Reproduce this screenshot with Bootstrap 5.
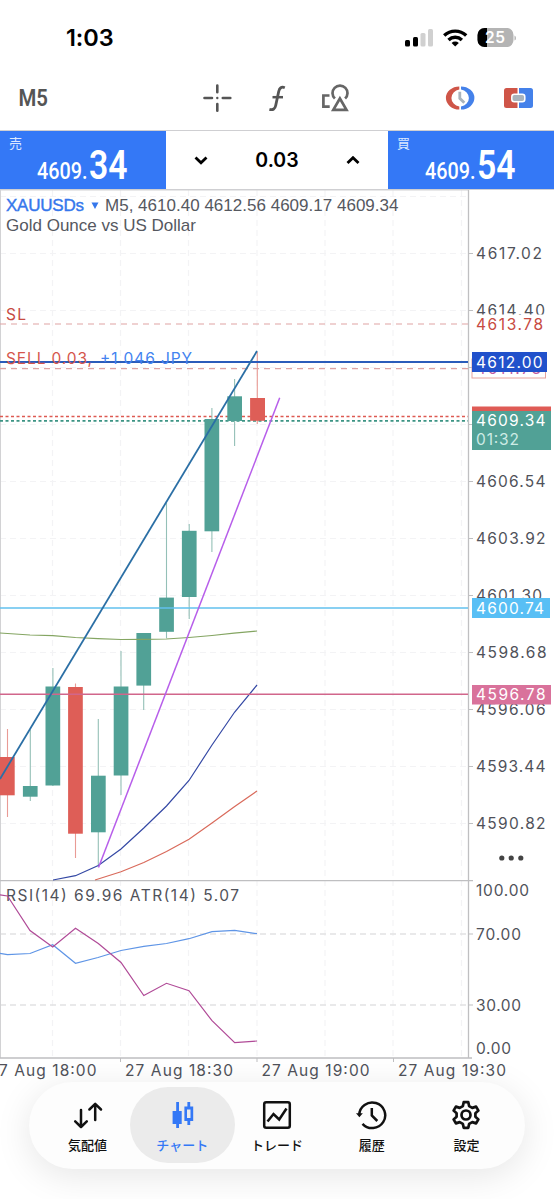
<!DOCTYPE html>
<html lang="ja">
<head>
<meta charset="utf-8">
<meta name="viewport" content="width=device-width, initial-scale=1">
<title>XAUUSDs M5</title>
<link href="https://cdn.jsdelivr.net/npm/bootstrap@5.3.0/dist/css/bootstrap.min.css" rel="stylesheet">
<style>
body{font-family:Inter,"Noto Sans CJK JP",sans-serif;background:#fff;overflow:hidden}
.screen{width:554px;height:1199px;overflow:hidden}
svg{display:block;flex:none}
.status{height:65px;padding:10px 38px 0 66px}
.clock{font-size:23.5px;font-weight:600;color:#000;letter-spacing:-.1px;line-height:1}
.tools{height:65px;padding:0 20px 0 18px}
.trade{height:60px;border-top:1.5px solid #cfcfd2;border-bottom:1px solid #cfcfd2}
.quote{width:166px;background:#3478f6;color:#fff}
.volume{font-size:19.5px;font-weight:600;color:#000;padding:1px 28px 0 28px}
.chart{height:895px}
.axis text,.ind{font:400 15.5px Inter,sans-serif;fill:#50525a}
.head{font:400 17px "Liberation Sans",sans-serif;fill:#55585f}
.din{font-family:Roboto,sans-serif;font-weight:500}
.tabs{left:29px;top:1082px;width:496px;height:87px;padding:5px 11px 6px;border-radius:44px;background:#fdfdfd;box-shadow:0 7px 36px rgba(0,0,0,.1)}
.tab{width:94.8px;padding-top:13px;color:#111;font:500 13px/18px "Noto Sans CJK JP",sans-serif;gap:6px}
.tab.on{width:105px;margin:0 -5.1px;border-radius:38px;background:#ebebeb;color:#3478f6}
</style>
</head>
<body>
<div class="screen position-relative d-flex flex-column">
  <header class="status d-flex align-items-center justify-content-between">
    <div class="clock">1:03</div>
    <svg width="112" height="24" viewBox="404 25 112 24">
      <rect x="405" y="39" width="5" height="6.5" rx="1.5"/><rect x="413" y="36" width="5" height="9.5" rx="1.5"/>
      <g fill="#d0d0d0"><rect x="420.5" y="32" width="5" height="13.5" rx="1.5"/><rect x="428" y="28" width="5" height="17.5" rx="1.5"/></g>
      <g fill="none" stroke="#000" stroke-width="3.4"><path d="M444.2 34.4a16.2 16.2 0 0 1 22 0"/><path d="M448.5 38.9a9.9 9.9 0 0 1 13.4 0"/></g>
      <path d="M455.2 45.5l-3.6-3.6a5.3 5.3 0 0 1 7.2 0z"/>
      <path d="M484.5 27h23a7 7 0 0 1 6 7v5a7 7 0 0 1-6 7h-23a7 7 0 0 1-7-7v-5a7 7 0 0 1 7-7z" fill="#b4b4b4"/>
      <path d="M487 27h-2.500a7 7 0 0 0-7 7v5a7 7 0 0 0 7 7h2.500z"/>
      <path d="M514.500 34.500v5q1.500-.5 1.500-2.500t-1.500-2.500" fill="#b4b4b4"/>
      <text x="485" y="42.300" font-size="15.500" font-weight="600" fill="#fff" textLength="20">25</text>
    </svg>
  </header>

  <div class="tools d-flex align-items-center">
    <svg width="516" height="40" viewBox="18 78 516 40">
      <text class="din" x="18.500" y="106" font-size="24.500" fill="#555" style="font-weight:600" textLength="29.500" lengthAdjust="spacingAndGlyphs">M5</text>
      <g fill="none" stroke="#555" stroke-width="2.600" stroke-linecap="round">
        <path d="M217.300 85.500v6.800M217.300 104v6.800M204.500 98h7.500M222.800 98h7.500"/>
      </g>
      <circle cx="217.300" cy="98" r="1.200" fill="#555"/>
      <g fill="none" stroke="#555" stroke-width="2.800">
        <path d="M284.800 87.700c-3.300-1.400-5.300.2-6.100 3.800l-3 14c-.7 3.200-2.500 4.900-6.300 3.800"/><path d="M272.500 97.200h10.500" stroke-width="2.500"/>
      </g>
      <g fill="none" stroke="#666" stroke-width="2.700">
        <path d="M329.500 95.500h-6.100v11.200h6.300"/>
        <path d="M334.900 98.600a7.500 7.500 0 1 1 10.200 0"/>
        <path d="M339.900 98.500l-6.600 11.300h13.200z"/>
      </g>
      <path d="M459.300 86.500a13.400 11.500 0 0 0 0 23v-3a9.300 8.600 0 0 1 0-17z" fill="#cf5548"/>
      <path d="M461 86.500a13.400 11.500 0 0 1 0 23v-3a9.300 8.600 0 0 0 0-17z" fill="#4481ea"/>
      <path d="M459.800 91.800v6.500l4.500 4.500" fill="none" stroke="#a9b4bd" stroke-width="2.800"/>
      <path d="M506.500 88h11v20h-11a2.500 2.500 0 0 1-2.500-2.500v-15a2.500 2.500 0 0 1 2.500-2.500z" fill="#cf5548"/>
      <path d="M519 88h11.500a2.500 2.500 0 0 1 2.500 2.500v15a2.500 2.500 0 0 1-2.500 2.500H519z" fill="#4481ea"/>
      <rect x="511.800" y="94.300" width="13" height="7.500" rx="2.500" fill="#a9b4bd" stroke="#fff" stroke-width="1.500"/>
    </svg>
  </div>

  <div class="trade d-flex">
    <div class="quote">
      <svg width="166" height="58" viewBox="0 131 166 58" fill="#fff">
        <text x="9" y="148" font-size="13" font-family="Noto Sans CJK JP" fill="#dce8ff">売</text>
        <text class="din" x="37" y="179.300" font-size="23.500" textLength="50.500" lengthAdjust="spacingAndGlyphs">4609.</text>
        <text class="din" x="89" y="179.300" font-size="40.500" style="font-weight:600" textLength="38.500" lengthAdjust="spacingAndGlyphs">34</text>
      </svg>
    </div>
    <div class="volume flex-fill d-flex align-items-center justify-content-between">
      <svg width="14" height="10" fill="none" stroke="#000" stroke-width="2.800"><path d="M1.500 1.500l5.500 5.300L12.500 1.500"/></svg>
      <span>0.03</span>
      <svg width="14" height="10" fill="none" stroke="#000" stroke-width="2.800"><path d="M1.500 7L7 1.700l5.500 5.300"/></svg>
    </div>
    <div class="quote">
      <svg width="166" height="58" viewBox="388 131 166 58" fill="#fff">
        <text x="397" y="148" font-size="13" font-family="Noto Sans CJK JP" fill="#dce8ff">買</text>
        <text class="din" x="425" y="179.300" font-size="23.500" textLength="50.500" lengthAdjust="spacingAndGlyphs">4609.</text>
        <text class="din" x="477" y="179.300" font-size="40.500" style="font-weight:600" textLength="38.500" lengthAdjust="spacingAndGlyphs">54</text>
      </svg>
    </div>
  </div>

  <main class="chart">
    <svg width="554" height="895" viewBox="0 190 554 895">
      <!-- grid -->
      <g stroke="#f3f3f5" stroke-width="1.200" stroke-dasharray="6 4">
        <path d="M52.500 190V1058M120.500 190V1058M188.500 190V1058M257 190V1058M325 190V1058M393 190V1058M461.500 190V1058"/>
        <path d="M0 196.500H468M0 253.500H468M0 310.500H468M0 367.500H468M0 424.500H468M0 481.500H468M0 538.500H468M0 595.500H468M0 652.500H468M0 709.500H468M0 766.500H468M0 823.500H468"/>
      </g>
      <path d="M0 934H468M0 1005H468" stroke="#e2e2e4" stroke-width="1.300" stroke-dasharray="6 4"/>
      <!-- frame -->
      <path d="M.5 190V1058" stroke="#d2d2d4"/>
      <path d="M0 190H469" stroke="#d2d2d4"/>
      <path d="M468.500 190V1058M0 880.700H473M0 1058H472" fill="none" stroke="#bfbfc1" stroke-width="1.300"/>
      <path d="M469 253.500h4M469 310.500h4M469 367.500h4M469 424.500h4M469 481.500h4M469 538.500h4M469 595.500h4M469 652.500h4M469 709.500h4M469 766.500h4M469 823.500h4M469 934h4M469 1005h4M120.500 1058v4M257 1058v4M393.500 1058v4" stroke="#bfbfc1"/>

      <!-- bid and ask -->
      <path d="M0 416.500H468" stroke="#dd5a52" stroke-width="1.700" stroke-dasharray="3 2.500"/>
      <path d="M0 420.800H468" stroke="#3c9484" stroke-width="1.700" stroke-dasharray="3 2.500"/>

      <!-- candles -->
      <g stroke="#94c0b7" stroke-width="1.100">
        <path d="M30.300 730V801M52.900 668V786M98.300 719V866M121 651V795M143.700 633V710M166.500 503V638M189.200 524V619M211.900 408V552M234.600 379V446"/>
      </g>
      <g stroke="#e99b95" stroke-width="1.100"><path d="M7.500 729V817M75.500 683.500V858M257.300 352V424"/></g>
      <g fill="#51a196">
        <rect x="22.900" y="786" width="14.700" height="10.700"/><rect x="45.500" y="686.500" width="14.700" height="99"/>
        <rect x="91" y="775.700" width="14.700" height="56.600"/><rect x="113.700" y="686.500" width="14.700" height="89"/>
        <rect x="136.400" y="633" width="14.700" height="52.600"/><rect x="159.200" y="597.600" width="14.700" height="34.200"/>
        <rect x="181.900" y="530.800" width="14.700" height="66.200"/><rect x="204.500" y="419" width="14.700" height="112.300"/>
        <rect x="227.300" y="396.300" width="14.700" height="24.700"/>
      </g>
      <g fill="#de5e57"><rect x="0" y="757" width="14.700" height="38.300"/><rect x="68.100" y="687" width="14.700" height="146.700"/><rect x="250.100" y="398" width="14.900" height="22.800"/></g>

      <!-- moving averages -->
      <g fill="none" stroke-width="1.200">
        <path d="M0 633L30 635 52.700 635.700 75.500 637.500 98 638.700 121 639.500 143 639.300 166 639 189 637.500 212 635.500 234 633.200 257 631" stroke="#84a562"/>
        <path d="M53 880L75.500 875.700 98.300 865.500 121 849 143.800 828 166.500 806 189 780.500 212 745 234.700 712 257 685" stroke="#3448a4"/>
        <path d="M95 880L121 871.700 143.800 862.500 166.500 851.500 189 839.300 212 823 234.700 806.500 257 791" stroke="#d96a5b"/>
      </g>

      <!-- levels -->
      <path d="M0 324H468M0 368.700H468" stroke="#dfa3a3" stroke-width="1.200" stroke-dasharray="6 5"/>
      <path d="M0 608H468" stroke="#62c0ee" stroke-width="1.700"/>
      <path d="M0 694.300H468" stroke="#d1668b" stroke-width="1.500"/>
      <path d="M0 362H468" stroke="#2a5cba" stroke-width="1.800"/>
      <g class="ind">
        <text x="6" y="319.500" textLength="20" style="fill:#c74a42">SL</text>
        <text x="6" y="364" textLength="86" style="fill:#d5564c">SELL 0.03,</text>
        <text x="100" y="364" textLength="92" style="fill:#4383f0">+1 046 JPY</text>
      </g>
      <path d="M0 779L257 351" stroke="#2b6fa5" stroke-width="1.800"/>
      <path d="M98.500 867.500L279.700 397.800" stroke="#b75eea" stroke-width="1.500"/>

      <!-- RSI and ATR -->
      <g class="ind"><text x="6" y="900.500" textLength="233">RSI(14) 69.96 ATR(14) 5.07</text></g>
      <g fill="none" stroke-width="1.200">
        <path d="M0 953.300L7.500 954.700 30 953.500 52.700 944.700 75.500 963.300 98 957.500 121 950.500 143.800 946.300 166.500 943.500 189 938.700 212 931.700 234.700 930.300 257 933.700" stroke="#5f95e6"/>
        <path d="M0 894.800L7.500 896 30 930.500 52.700 947 75.500 928.300 98.300 943.500 121 962.500 143.800 995.500 166.500 983.300 189 990.700 212 1020.700 234.700 1042.700 257 1041" stroke="#b04a97"/>
      </g>

      <!-- title -->
      <text class="head" x="6" y="210.500" textLength="78" style="fill:#3577ec;stroke:#3577ec;stroke-width:.4">XAUUSDs</text>
      <path d="M91.500 202.500h7l-3.500 6.500z" fill="#3577ec"/>
      <text class="head" x="105" y="210.500" textLength="293.500">M5, 4610.40 4612.56 4609.17 4609.34</text>
      <text class="head" x="6" y="231.200" textLength="190">Gold Ounce vs US Dollar</text>

      <!-- price and time scales -->
      <g class="axis">
        <text x="476" y="259" textLength="66">4617.02</text>
        <text x="476" y="316" textLength="69">4614.40</text>
        <rect x="474" y="314.500" width="74" height="17" fill="#fff"/>
        <text x="476" y="329.600" textLength="67" style="fill:#c74a42">4613.78</text>
        <text x="476" y="487.200" textLength="69.500">4606.54</text>
        <text x="476" y="544.200" textLength="69.500">4603.92</text>
        <text x="476" y="601.200" textLength="66">4601.30</text>
        <text x="476" y="658.200" textLength="70.500">4598.68</text>
        <text x="476" y="715.200" textLength="69.500">4596.06</text>
        <text x="476" y="772.200" textLength="69.500">4593.44</text>
        <text x="476" y="829.200" textLength="69.500">4590.82</text>
        <text x="476" y="896" textLength="53">100.00</text>
        <text x="476" y="939.500" textLength="45">70.00</text>
        <text x="476" y="1010.500" textLength="45">30.00</text>
        <text x="476" y="1054" textLength="35">0.00</text>
        <text x="-11.500" y="1076" textLength="108">27 Aug 18:00</text>
        <text x="125" y="1076" textLength="108">27 Aug 18:30</text>
        <text x="261.500" y="1076" textLength="108">27 Aug 19:00</text>
        <text x="398" y="1076" textLength="108">27 Aug 19:30</text>
        <rect x="472" y="359" width="73.500" height="19" fill="#fff" stroke="#e6a29d"/>
        <text x="476" y="374" textLength="65" style="fill:#c05aa0">4611.73</text>
        <rect x="472" y="352" width="75" height="20" fill="#2151cb"/>
        <text x="476" y="368" textLength="66.500" style="fill:#fff">4612.00</text>
        <rect x="472" y="406.500" width="79" height="10" fill="#df5b55"/>
        <rect x="472" y="411" width="79" height="39" fill="#51a196"/>
        <text x="476" y="426.300" textLength="69.500" style="fill:#fff">4609.34</text>
        <text x="476" y="444.800" textLength="43" style="fill:#cdebe5">01:32</text>
        <rect x="472" y="598" width="78" height="20" fill="#58bff5"/>
        <text x="476" y="613.700" textLength="68" style="fill:#fff">4600.74</text>
        <rect x="472" y="685" width="79" height="19.500" fill="#d9729b"/>
        <text x="476" y="700.300" textLength="69.500" style="fill:#fff">4596.78</text>
      </g>
      <g fill="#444"><circle cx="501.800" cy="858" r="2.600"/><circle cx="511.200" cy="858" r="2.600"/><circle cx="520.800" cy="858" r="2.600"/></g>
    </svg>
  </main>

  <nav class="tabs position-absolute d-flex">
    <div class="tab d-flex flex-column align-items-center">
      <svg width="32" height="30" viewBox="71 1100 32 30" fill="none" stroke="#111" stroke-width="2.500" stroke-linecap="round" stroke-linejoin="round"><path d="M81 1110v16.500M75.200 1121.300l5.800 5.700 5.800-5.700M95.200 1120v-16M89.400 1109.500l5.800-5.700 5.800 5.700"/></svg>
      <span>気配値</span>
    </div>
    <div class="tab on d-flex flex-column align-items-center">
      <svg width="32" height="30" viewBox="165.500 1100 32 30" fill="#3478f6"><path d="M175.700 1102h2.800v9h2.700v13h-2.700v4h-2.800v-4h-3.600v-13h3.600z"/><path d="M186.900 1102h2.800v4.500h3v14.500h-3v4h-2.800v-4h-3v-14.500h3zm-.4 7.500v8.500h3.500v-8.500z" fill-rule="evenodd"/></svg>
      <span>チャート</span>
    </div>
    <div class="tab d-flex flex-column align-items-center">
      <svg width="32" height="30" viewBox="261 1100 32 30" fill="none" stroke="#111" stroke-width="2.500"><rect x="264.200" y="1102.200" width="25.600" height="25.600" rx="2"/><path d="M267.500 1121.500l6-7.500 5.700 5.500 7.300-11"/></svg>
      <span>トレード</span>
    </div>
    <div class="tab d-flex flex-column align-items-center">
      <svg width="32" height="30" viewBox="355.500 1100 32 30" fill="none" stroke="#111" stroke-width="2.500"><path d="M358.700 1115a13 12.800 0 1 1 3.300 8.800"/><path d="M371.300 1108v7.500l5.500 5.500"/><path d="M355.500 1113.300h6.800l-3.400 4z" fill="#111" stroke="none"/></svg>
      <span>履歴</span>
    </div>
    <div class="tab d-flex flex-column align-items-center">
      <svg width="32" height="30" viewBox="-15 -15 32 30" fill="none" stroke="#111" stroke-width="2.700" stroke-linejoin="round"><path d="M-2.300-12.800h4.600l.8 3.900 3.200 1.800 3.800-1.300 2.300 4-3 2.600v3.600l3 2.600-2.300 4-3.800-1.300-3.200 1.800-.8 3.900h-4.600l-.8-3.900-3.200-1.800-3.800 1.300-2.300-4 3-2.600v-3.600l-3-2.600 2.300-4 3.800 1.300 3.200-1.800z"/><circle r="4.500"/></svg>
      <span>設定</span>
    </div>
  </nav>
</div>
<script src="https://cdn.jsdelivr.net/npm/bootstrap@5.3.0/dist/js/bootstrap.bundle.min.js"></script>
</body>
</html>
